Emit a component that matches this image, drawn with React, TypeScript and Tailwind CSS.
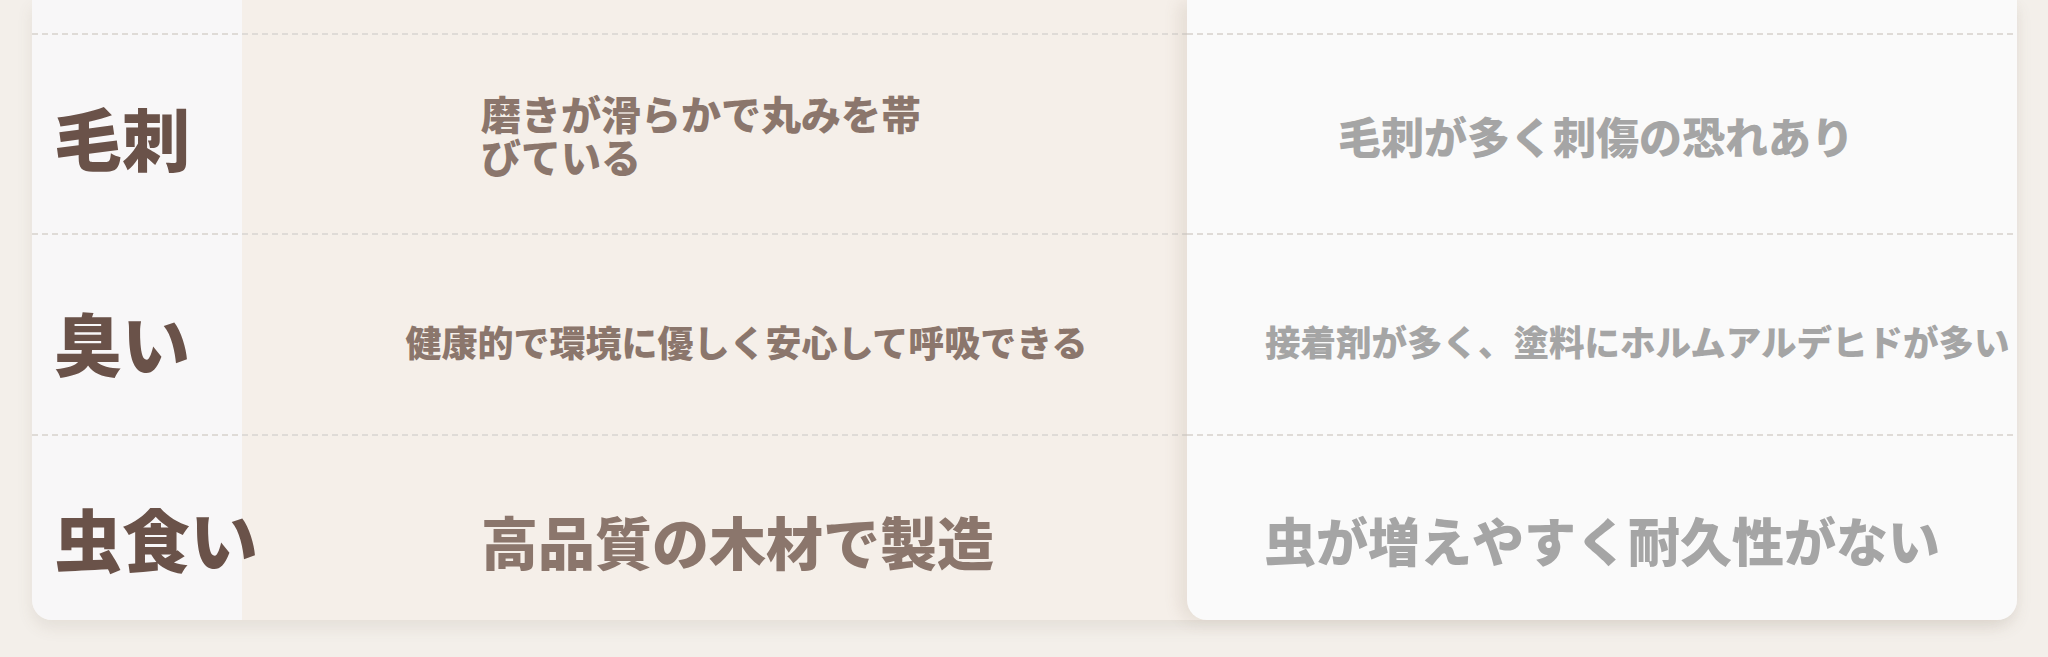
import React from "react";

const Dash = () => (
  <div className="h-[2px] w-full shrink-0 bg-[linear-gradient(to_right,#dfdbd7_60%,transparent_60%)] bg-[length:10px_2px] bg-repeat-x" />
);

export default function App() {
  return (
    <div className="w-[2048px] h-[657px] bg-[#f3efea] pl-[32px] pr-[31px] font-['Noto_Sans_CJK_JP','Noto_Sans',sans-serif] overflow-hidden">
      <div className="flex h-[620px] rounded-b-[20px] bg-[#f5efe9] shadow-[0_8px_16px_rgba(110,90,70,0.10)]">
        {/* label column */}
        <div className="w-[210px] shrink-0 flex flex-col bg-[#f8f7f8] rounded-bl-[20px]">
          <div className="h-[33px] shrink-0" />
          <Dash />
          <div className="h-[198px] shrink-0 flex items-center pl-[22px] pt-[6px]">
            <span className="text-[68px] leading-none font-black text-[#6a5249] whitespace-nowrap">毛刺</span>
          </div>
          <Dash />
          <div className="h-[199px] shrink-0 flex items-center pl-[22px] pt-[14px]">
            <span className="text-[68px] leading-none font-black text-[#6a5249] whitespace-nowrap">臭い</span>
          </div>
          <Dash />
          <div className="flex-1 flex items-center pl-[22px] pt-[20px]">
            <span className="text-[68px] leading-none font-black text-[#6a5249] whitespace-nowrap">虫食い</span>
          </div>
        </div>

        {/* middle column */}
        <div className="flex-1 flex flex-col">
          <div className="h-[33px] shrink-0" />
          <Dash />
          <div className="h-[198px] shrink-0 flex items-center pl-[239px] pt-[2px]">
            <p className="max-w-[450px] text-[40px] leading-[43px] font-black text-[#8b766c]">
              磨きが滑らかで丸みを帯びている
            </p>
          </div>
          <Dash />
          <div className="h-[199px] shrink-0 flex items-center justify-center pl-[64px] pt-[12px]">
            <span className="text-[36px] leading-none font-black text-[#8b766c] whitespace-nowrap">
              健康的で環境に優しく安心して呼吸できる
            </span>
          </div>
          <Dash />
          <div className="flex-1 flex items-center justify-center pl-[46px] pt-[24px]">
            <span className="text-[57px] leading-none font-black text-[#8b766c] whitespace-nowrap">
              高品質の木材で製造
            </span>
          </div>
        </div>

        {/* right column */}
        <div className="w-[830px] shrink-0 flex flex-col bg-[#fafafa] rounded-b-[20px] overflow-hidden shadow-[-8px_2px_16px_rgba(120,95,70,0.12)]">
          <div className="h-[33px] shrink-0" />
          <Dash />
          <div className="h-[198px] shrink-0 pl-[80px] pr-[92px] pt-[2px] flex items-center justify-center">
            <span className="text-[43px] leading-none font-black text-[#a5a5a5] whitespace-nowrap">
              毛刺が多く刺傷の恐れあり
            </span>
          </div>
          <Dash />
          <div className="h-[199px] shrink-0 pl-[78px] pt-[12px] flex items-center">
            <span className="text-[35.5px] leading-none font-black text-[#a5a5a5] whitespace-nowrap">
              接着剤が多く、塗料にホルムアルデヒドが多い
            </span>
          </div>
          <Dash />
          <div className="flex-1 px-[80px] pt-[24px] flex items-center justify-center">
            <span className="text-[52px] leading-none font-black text-[#a5a5a5] whitespace-nowrap">
              虫が増えやすく耐久性がない
            </span>
          </div>
        </div>
      </div>
    </div>
  );
}
